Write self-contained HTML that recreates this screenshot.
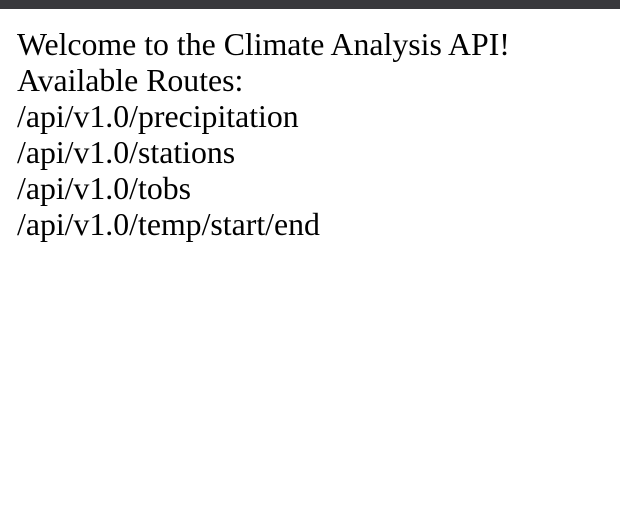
<!DOCTYPE html>
<html><head><style>
html,body{margin:0;padding:0;background:#fff;width:620px;height:518px;overflow:hidden}
.bar{height:9px;background:#38383c}
.c{position:absolute;left:17px;top:27px;font-family:"Liberation Serif",serif;font-size:31.8px;line-height:36px;color:#000;white-space:nowrap}
</style></head><body>
<div class="bar"></div>
<div class="c">Welcome to the Climate Analysis API!<br>Available Routes:<br>/api/v1.0/precipitation<br>/api/v1.0/stations<br>/api/v1.0/tobs<br>/api/v1.0/temp/start/end</div>
</body></html>
